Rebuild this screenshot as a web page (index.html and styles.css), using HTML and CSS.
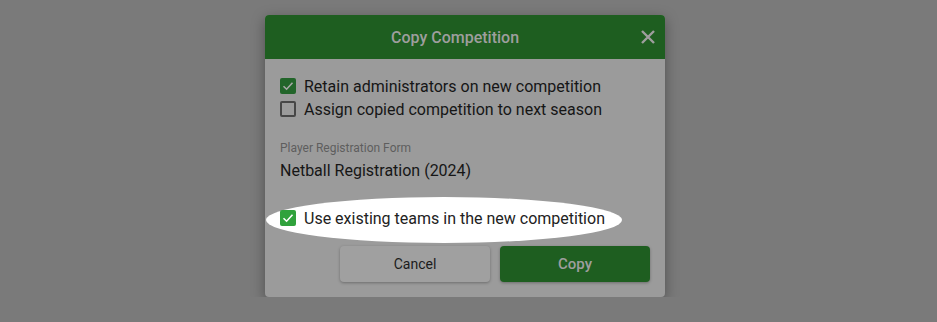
FILE: index.html
```html
<!DOCTYPE html>
<html lang="en">
<head>
    <meta charset="UTF-8">
    <meta name="viewport" content="width=device-width, initial-scale=1.0">
    <title>Copy Competition</title>
    <link rel="stylesheet" href="styles.css">
</head>
<body>
    <div class="dialog">
        <header class="dialog-header">
            <h1>Copy Competition</h1>
            <button class="close" aria-label="Close">
                <svg width="16" height="16" viewBox="0 0 16 16">
                    <path d="M2 2 L14 14 M14 2 L2 14" stroke="currentColor" stroke-width="2.4" fill="none"/>
                </svg>
            </button>
        </header>

        <div class="dialog-body">
            <label class="option">
                <span class="box checked">
                    <svg width="12" height="12" viewBox="0 0 12 12"><path d="M1.5 6.2 L4.6 9.2 L10.5 2.8" stroke="currentColor" stroke-width="1.6" fill="none"/></svg>
                </span>
                Retain administrators on new competition
            </label>
            <label class="option">
                <span class="box"></span>
                Assign copied competition to next season
            </label>

            <div class="field">
                <div class="field-label">Player Registration Form</div>
                <div class="field-value">Netball Registration (2024)</div>
            </div>

            <div class="highlight"></div>
            <label class="option lit">
                <span class="box checked">
                    <svg width="12" height="12" viewBox="0 0 12 12"><path d="M1.5 6.2 L4.6 9.2 L10.5 2.8" stroke="currentColor" stroke-width="1.6" fill="none"/></svg>
                </span>
                Use existing teams in the new competition
            </label>

            <div class="actions">
                <button class="btn btn-cancel">Cancel</button>
                <button class="btn btn-copy">Copy</button>
            </div>
        </div>
    </div>
</body>
</html>
```

FILE: styles.css
```css
body {
    font-family: Roboto, "Liberation Sans", sans-serif;
    margin: 0;
    padding: 0;
    background-color: #7a7a7a;
    color: #161616;
}

.dialog {
    position: relative;
    width: 400px;
    height: 282px;
    margin: 15px 0 0 265px;
    background-color: #9b9b9b;
    border-radius: 4px;
    box-shadow: 0 4px 14px rgba(0, 0, 0, 0.35);
}

.dialog-header {
    position: relative;
    height: 44px;
    padding-right: 20px;
    background-color: #1e5e20;
    border-radius: 4px 4px 0 0;
    display: flex;
    align-items: center;
    justify-content: center;
}

.dialog-header h1 {
    margin: 0;
    font-size: 16px;
    font-weight: 500;
    color: #9e9e9e;
}

.close {
    position: absolute;
    right: 9px;
    top: 14px;
    padding: 0;
    border: none;
    background: none;
    color: #9e9e9e;
    display: flex;
}

.dialog-body {
    position: relative;
    padding: 19px 15px 0;
}

.option {
    display: flex;
    align-items: center;
    gap: 8px;
    height: 16px;
    margin-bottom: 7px;
    font-size: 16px;
}

.box {
    width: 16px;
    height: 16px;
    box-sizing: border-box;
    border: 2px solid #474747;
    border-radius: 2px;
    display: flex;
    align-items: center;
    justify-content: center;
    flex-shrink: 0;
}

.box.checked {
    border: none;
    background-color: #22652a;
    color: #a8a8a8;
}

.field {
    margin-top: 24px;
}

.field-label {
    font-size: 12px;
    color: #5e5e5e;
    line-height: 14px;
}

.field-value {
    margin-top: 7px;
    font-size: 16px;
    line-height: 18px;
}

.highlight {
    position: absolute;
    left: 1px;
    top: 138px;
    width: 356px;
    height: 46px;
    border-radius: 50%;
    background-color: #fff;
}

.option.lit {
    position: relative;
    margin-top: 30px;
    color: #222;
}

.option.lit .box.checked {
    background-color: #30a23c;
    color: #fff;
}

.actions {
    display: flex;
    justify-content: flex-end;
    gap: 10px;
    margin-top: 20px;
}

.btn {
    width: 150px;
    height: 36px;
    padding-bottom: 2px;
    border: none;
    border-radius: 4px;
    font-family: inherit;
    font-size: 14px;
    box-shadow: 0 1px 3px rgba(0, 0, 0, 0.3);
}

.btn-cancel {
    background-color: #a0a0a0;
    color: #1c1c1c;
}

.btn-copy {
    background-color: #1e5e20;
    color: #9e9e9e;
    font-size: 15px;
    font-weight: 500;
}
```
